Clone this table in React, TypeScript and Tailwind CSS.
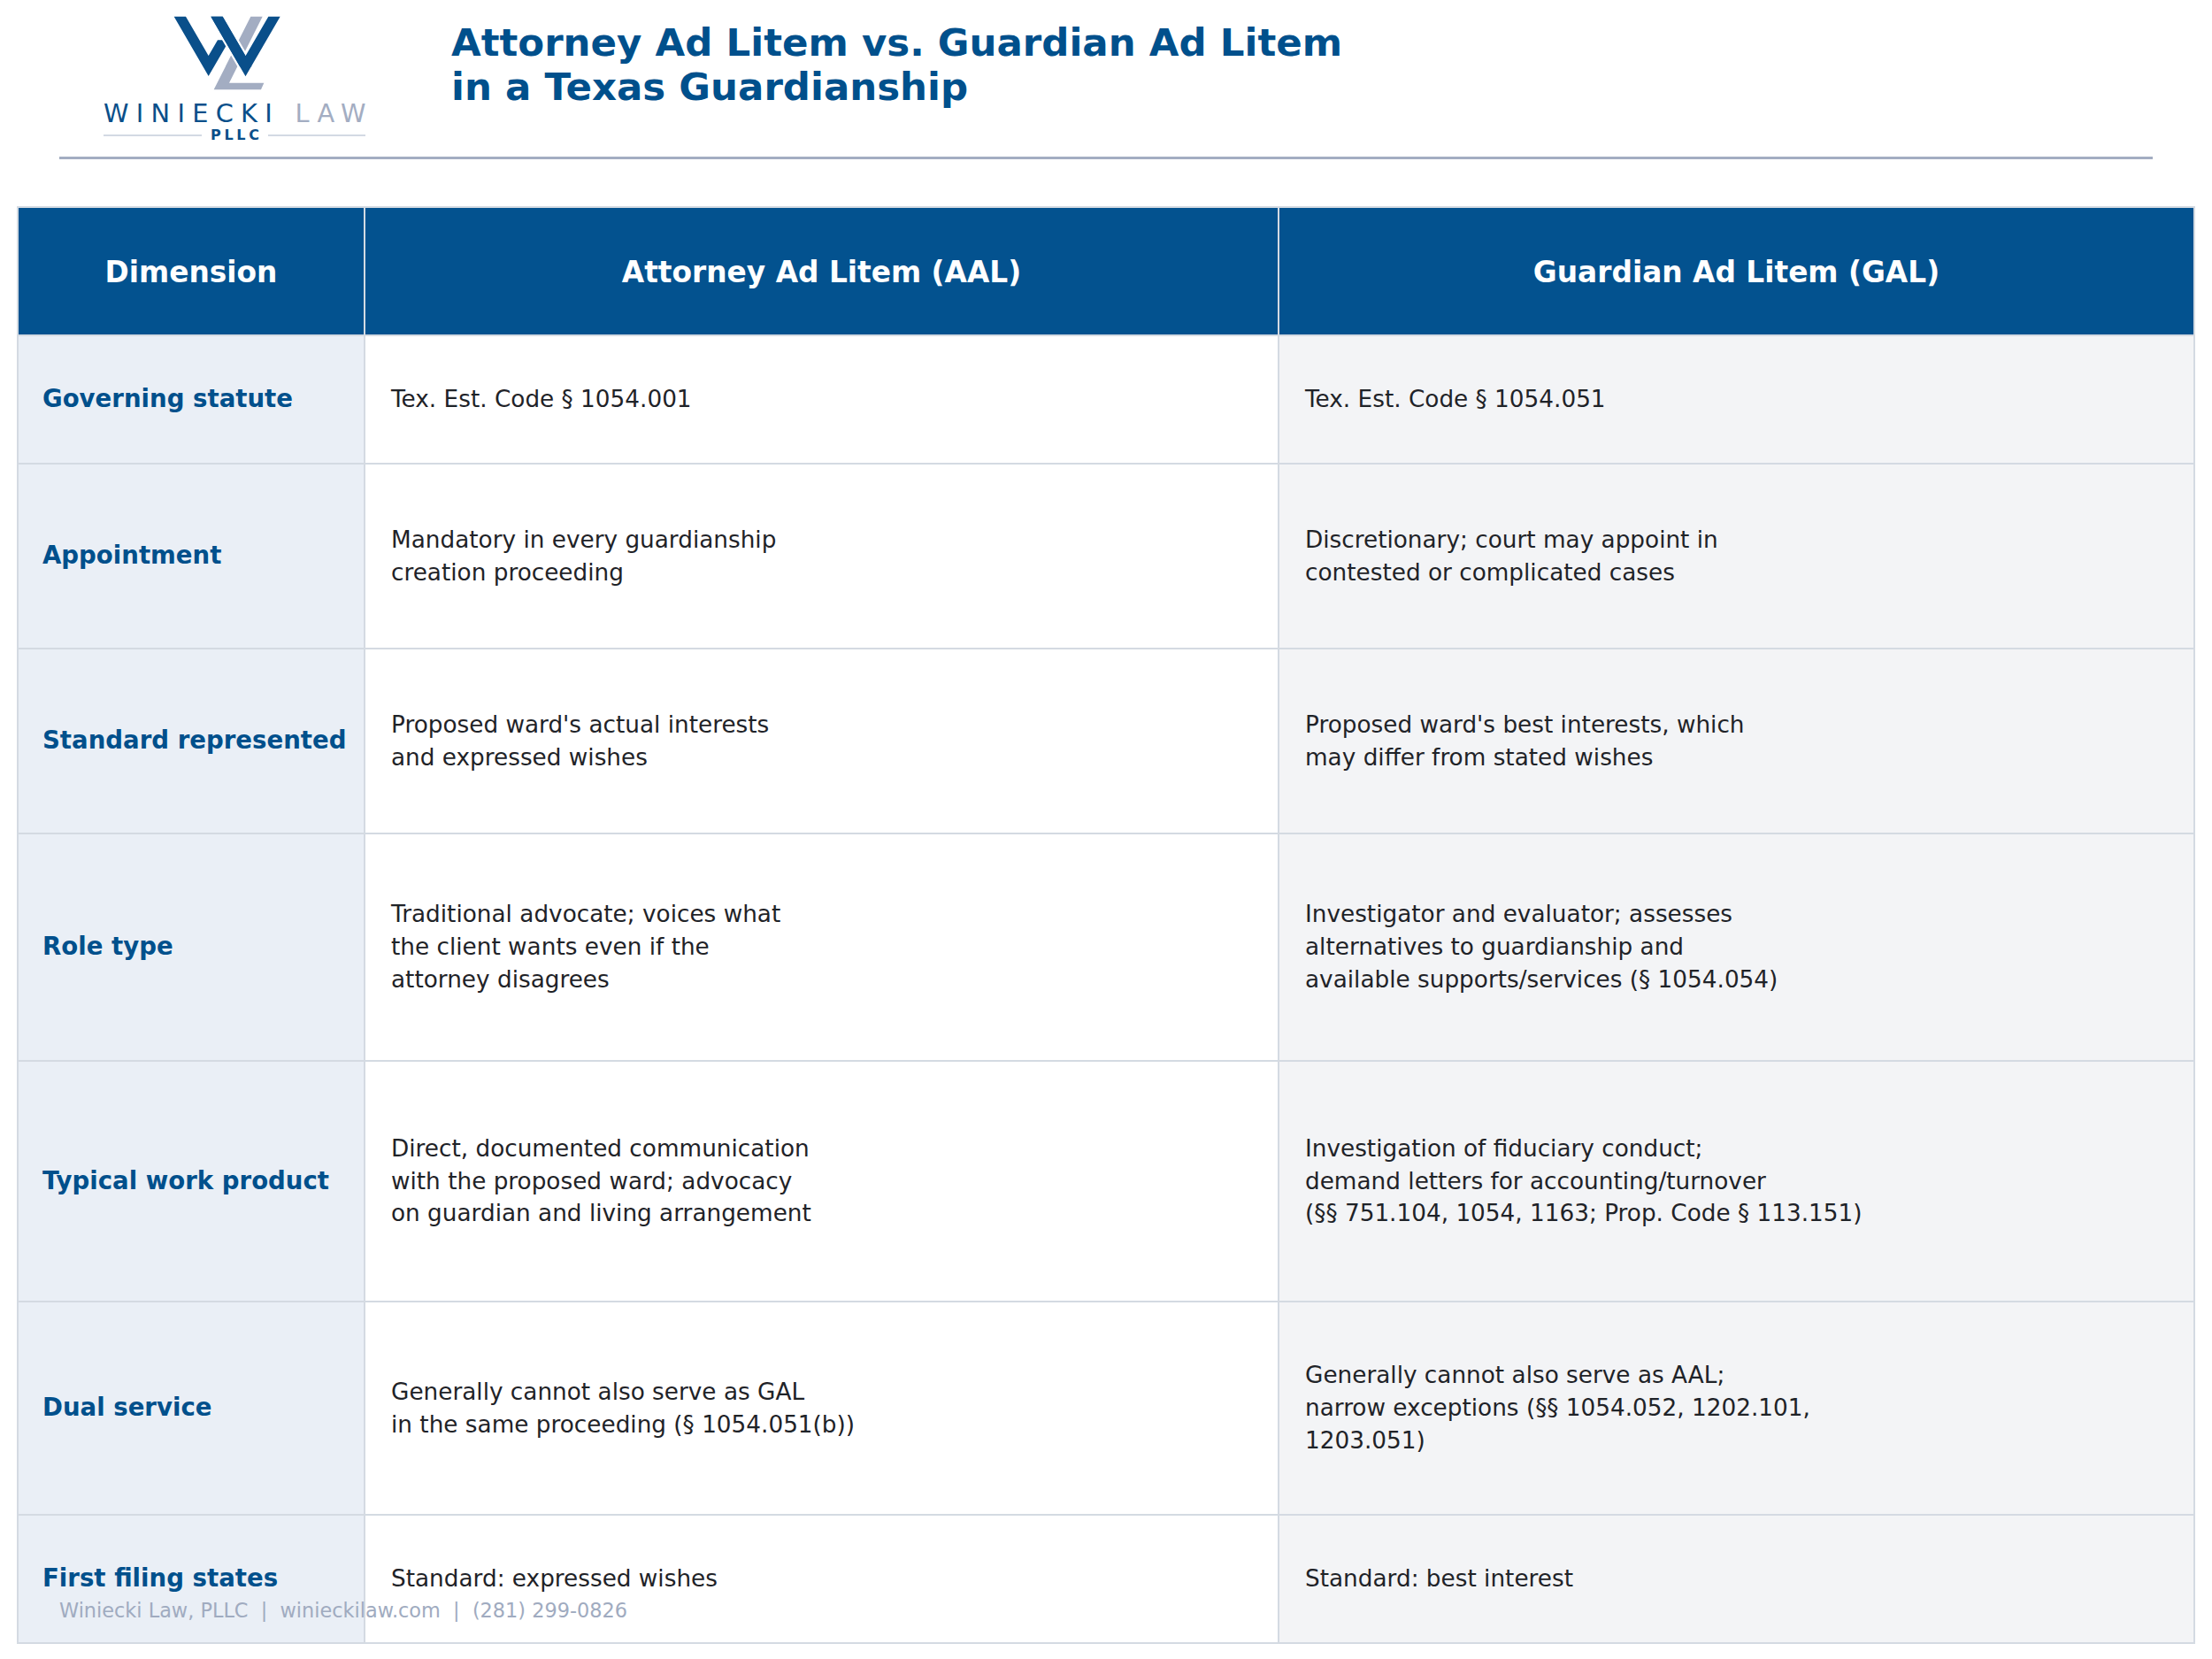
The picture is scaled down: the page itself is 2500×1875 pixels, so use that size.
import React from "react";

type Row = {
  label: string;
  aal: string[];
  gal: string[];
  h: string;
};

const rows: Row[] = [
  {
    label: "Governing statute",
    aal: ["Tex. Est. Code § 1054.001"],
    gal: ["Tex. Est. Code § 1054.051"],
    h: "h-[145px]",
  },
  {
    label: "Appointment",
    aal: ["Mandatory in every guardianship", "creation proceeding"],
    gal: ["Discretionary; court may appoint in", "contested or complicated cases"],
    h: "h-[209px]",
  },
  {
    label: "Standard represented",
    aal: ["Proposed ward's actual interests", "and expressed wishes"],
    gal: ["Proposed ward's best interests, which", "may differ from stated wishes"],
    h: "h-[209px]",
  },
  {
    label: "Role type",
    aal: ["Traditional advocate; voices what", "the client wants even if the", "attorney disagrees"],
    gal: [
      "Investigator and evaluator; assesses",
      "alternatives to guardianship and",
      "available supports/services (§ 1054.054)",
    ],
    h: "h-[257px]",
  },
  {
    label: "Typical work product",
    aal: [
      "Direct, documented communication",
      "with the proposed ward; advocacy",
      "on guardian and living arrangement",
    ],
    gal: [
      "Investigation of fiduciary conduct;",
      "demand letters for accounting/turnover",
      "(§§ 751.104, 1054, 1163; Prop. Code § 113.151)",
    ],
    h: "h-[272px]",
  },
  {
    label: "Dual service",
    aal: ["Generally cannot also serve as GAL", "in the same proceeding (§ 1054.051(b))"],
    gal: [
      "Generally cannot also serve as AAL;",
      "narrow exceptions (§§ 1054.052, 1202.101,",
      "1203.051)",
    ],
    h: "h-[241px]",
  },
  {
    label: "First filing states",
    aal: ["Standard: expressed wishes"],
    gal: ["Standard: best interest"],
    h: "h-[145px]",
  },
];

// WL monogram, drawn in a 435x285 box
function Monogram() {
  return (
    <svg width="145" height="95" viewBox="0 0 435 285" className="ml-[68px] mt-[12px] block">
      {/* slanted L, runs behind the middle stroke */}
      <polygon points="295,20 335,20 222,245 340,245 330,268 170,268" fill="#a3adc2" />
      {/* left V */}
      <polygon points="35,20 75,20 152,153 183,100 223,100 152,222" fill="#0a4f8a" />
      {/* middle stroke with a white gap around it */}
      <polygon
        points="160,20 200,20 298.6,190 258.6,190"
        fill="#0a4f8a"
        stroke="#ffffff"
        strokeWidth="14"
        paintOrder="stroke"
      />
      {/* right V */}
      <polygon points="160,20 200,20 277.5,153.6 355,20 395,20 277.5,222.6" fill="#0a4f8a" />
    </svg>
  );
}

function Logo() {
  return (
    <div className="ml-[117px] flex w-[296px] flex-col">
      <Monogram />
      <div className="mt-[6.6px] whitespace-nowrap text-[28.8px] leading-none tracking-[8.3px]">
        <span className="text-[#0a4f8a]">WINIECKI</span> <span className="text-[#a3adc2]">LAW</span>
      </div>
      <div className="mt-[3px] flex items-center">
        <div className="h-[2px] w-[111px] bg-[#d3d9e3]" />
        <span className="ml-[10px] mr-[6px] text-[16px] font-bold leading-none tracking-[3.7px] text-[#0a4f8a]">
          PLLC
        </span>
        <div className="h-[2px] w-[110px] bg-[#d3d9e3]" />
      </div>
    </div>
  );
}

function Lines({ lines }: { lines: string[] }) {
  return (
    <div>
      {lines.map((l) => (
        <div key={l} className="whitespace-nowrap">
          {l}
        </div>
      ))}
    </div>
  );
}

export default function App() {
  return (
    <div className="relative h-[1875px] w-[2500px] overflow-hidden bg-white font-['DejaVu_Sans',sans-serif]">
      <header className="flex h-[177px] items-start">
        <Logo />
        <h1 className="ml-[97px] mt-[23px] text-[43.5px] font-bold leading-[50px] text-[#00508c]">
          Attorney Ad Litem vs. Guardian Ad Litem
          <br />
          in a Texas Guardianship
        </h1>
      </header>

      <div className="ml-[67px] h-[3px] w-[2366px] bg-[#a3adc2]" />

      <div className="ml-[19px] mt-[53px] grid w-[2462px] grid-cols-[392px_1033px_1035px] border-l-2 border-t-2 border-[#d4dae2]">
        {["Dimension", "Attorney Ad Litem (AAL)", "Guardian Ad Litem (GAL)"].map((t) => (
          <div
            key={t}
            className="flex h-[145px] items-center justify-center border-b-2 border-r-2 border-[#d4dae2] bg-[#03528f] pt-[4px] text-[32.8px] font-bold text-white"
          >
            {t}
          </div>
        ))}

        {rows.map((r) => (
          <React.Fragment key={r.label}>
            <div
              className={`${r.h} flex items-center border-b-2 border-r-2 border-[#d4dae2] bg-[#eaeff6] pl-[27px] text-[27.6px] font-bold leading-[1.4] text-[#00508c]`}
            >
              {r.label}
            </div>
            <div
              className={`${r.h} flex items-center border-b-2 border-r-2 border-[#d4dae2] bg-white pl-[29px] text-[26.3px] leading-[1.4] text-[#1f2328]`}
            >
              <Lines lines={r.aal} />
            </div>
            <div
              className={`${r.h} flex items-center border-b-2 border-r-2 border-[#d4dae2] bg-[#f3f4f6] pl-[29px] text-[26.3px] leading-[1.4] text-[#1f2328]`}
            >
              <Lines lines={r.gal} />
            </div>
          </React.Fragment>
        ))}
      </div>

      <div className="absolute left-[67px] top-[1809px] whitespace-pre text-[22.4px] leading-none text-[#a0abc0]">
        {"Winiecki Law, PLLC  |  winieckilaw.com  |  (281) 299-0826"}
      </div>
    </div>
  );
}
